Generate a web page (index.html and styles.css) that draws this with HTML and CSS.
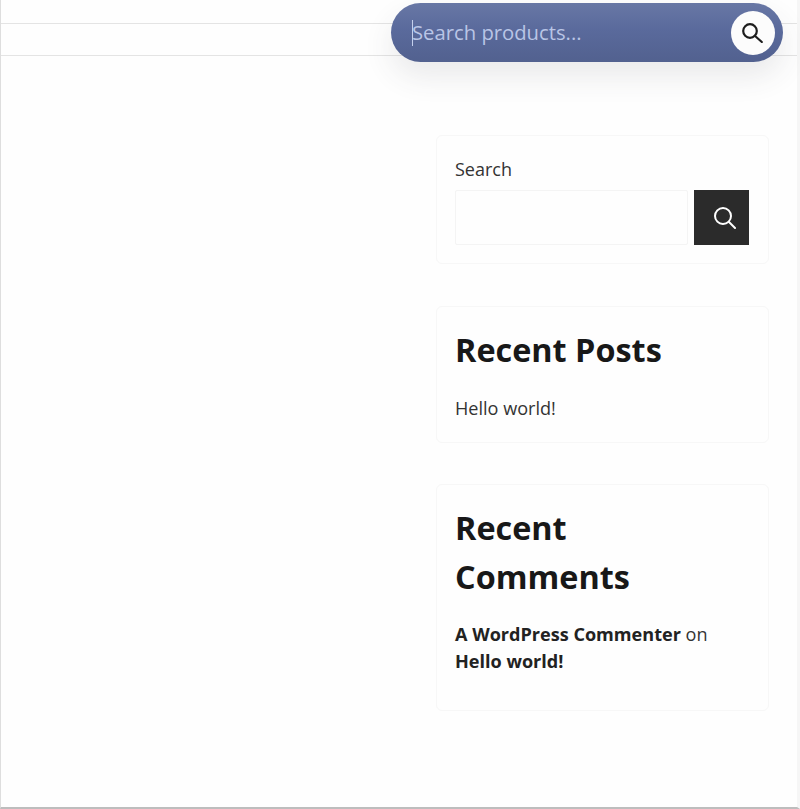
FILE: index.html
```
<!DOCTYPE html>
<html lang="en">
<head>
<meta charset="utf-8">
<title>Search products</title>
<link rel="stylesheet" href="styles.css">
</head>
<body>
<div class="page">
  <header class="header">
    <div class="header-top"></div>
    <div class="header-nav"></div>
  </header>
  <div class="product-search">
    <span class="caret"></span>
    <span class="placeholder">Search products...</span>
    <button class="product-search-btn" aria-label="Search">
      <svg width="21" height="20" viewBox="0 0 21 20" fill="none" stroke="#1d1d1d" stroke-width="2.2" stroke-linecap="round"><circle cx="8" cy="8" r="6.8"/><path d="M12.8 12.8l7 6.2"/></svg>
    </button>
  </div>
  <aside class="sidebar">
    <section class="card card-search">
      <label class="search-label">Search</label>
      <div class="search-row">
        <div class="search-input"></div>
        <button class="search-btn" aria-label="Search">
          <svg width="22" height="22" viewBox="0 0 22 22" fill="none" stroke="#fff" stroke-width="2" stroke-linecap="round"><circle cx="9" cy="9" r="8"/><path d="M15 15l6 6"/></svg>
        </button>
      </div>
    </section>
    <section class="card card-posts">
      <h2 class="card-title">Recent Posts</h2>
      <p class="card-text">Hello world!</p>
    </section>
    <section class="card card-comments">
      <h2 class="card-title">Recent Comments</h2>
      <p class="card-text"><strong>A WordPress Commenter</strong> on <strong>Hello world!</strong></p>
    </section>
  </aside>
</div>
</body>
</html>
```
FILE: styles.css
```
* { box-sizing: border-box; }
html, body { margin: 0; height: 100%; }
body {
  font-family: "Open Sans", "Noto Sans", sans-serif;
  color: #222;
  background: #fff;
  overflow: hidden;
}
.page {
  position: relative;
  height: 809px;
  border-left: 1px solid #dedede;
  border-right: 3px solid #f6f6f6;
  border-bottom: 2px solid #bdbdbd;
  background: #fefefe;
}
.header-top { height: 24px; border-bottom: 1px solid #e4e4e4; }
.header-nav { height: 32px; border-bottom: 1px solid #e4e4e4; }
.product-search {
  position: absolute;
  top: 3px;
  right: 14px;
  width: 392px;
  height: 59px;
  border-radius: 30px;
  background: linear-gradient(180deg, #6877a5 0%, #5a6a9c 45%, #52618f 100%);
  box-shadow: 0 14px 30px rgba(60, 60, 70, 0.11);
  display: flex;
  align-items: center;
  padding: 0 8px 0 21px;
  color: #b9c5e6;
  font-size: 20.25px;
}
.caret { width: 1px; height: 26px; background: #c4cfec; margin-right: -1px; }
.placeholder { flex: 1; padding-bottom: 2px; }
.product-search-btn {
  width: 44px;
  height: 44px;
  border: 0;
  padding: 0 2px 0 0;
  border-radius: 50%;
  background: #fcfcfc;
  display: flex;
  align-items: center;
  justify-content: center;
}
.sidebar {
  width: 333px;
  margin-left: 435px;
  padding-top: 79px;
  display: flex;
  flex-direction: column;
}
.card {
  border: 1px solid #f7f7f7;
  border-radius: 6px;
  padding: 18px 19px 20px 18px;
  background: #fefefe;
}
.card-search { padding-top: 20px; height: 129px; margin-bottom: 42px; }
.card-posts { margin-bottom: 41px; }
.card-posts .card-title { margin-bottom: 21px; }
.card-comments { padding-bottom: 35px; }
.card-comments .card-title { margin-bottom: 20px; }
.search-label { display: block; font-size: 18px; line-height: 27px; color: #333; margin-bottom: 7px; }
.search-row { display: flex; gap: 6px; }
.search-input { flex: 1; height: 55px; border: 1px solid #f4f4f4; border-radius: 2px; background: #fefefe; }
.search-btn {
  width: 55px;
  height: 55px;
  border: 0;
  padding: 0 0 0 6px;
  background: #2b2b2b;
  display: flex;
  align-items: center;
  justify-content: center;
}
.card-title {
  margin: 0;
  font-size: 32.4px;
  line-height: 49px;
  font-weight: 700;
  color: #181818;
}
.card-text { margin: 0; font-size: 18.08px; line-height: 27px; color: #333; }
.card-text strong { color: #222; }
```
